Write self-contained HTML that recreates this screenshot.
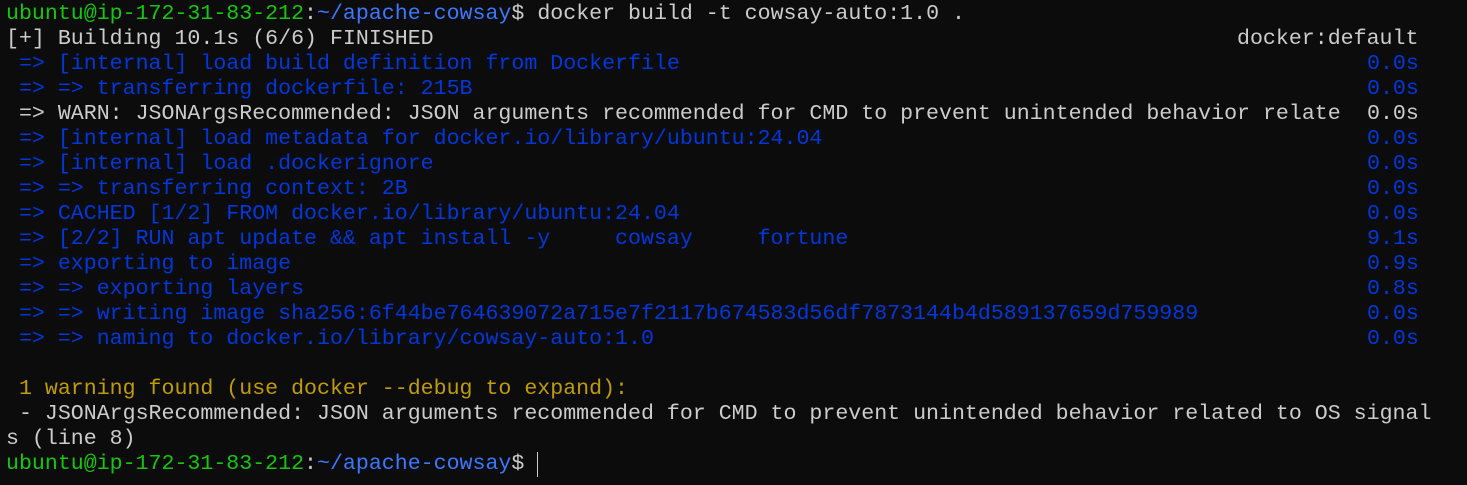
<!DOCTYPE html>
<html><head><meta charset="utf-8"><style>
html,body{margin:0;padding:0;background:#0c0c0c;width:1467px;height:485px;overflow:hidden}
.t{position:absolute;left:6px;top:2px;font-family:"Liberation Mono","DejaVu Sans Mono",monospace;font-size:21.6px;color:#cccccc}
.l{height:25px;line-height:25px;position:relative;white-space:pre}
.r{position:absolute;left:1361px}
.d{position:absolute;left:1231px}
.g{color:#16c60c}.c{color:#3b78ff}.b{color:#0037da}.y{color:#c19c00}
.cur{position:absolute;left:537px;top:452px;width:1px;height:25px;background:#cccccc}
</style></head><body>
<div class="t"><div class="l"><span class="g">ubuntu@ip-172-31-83-212</span>:<span class="c">~/apache-cowsay</span>$ docker build -t cowsay-auto:1.0 .</div><div class="l">[+] Building 10.1s (6/6) FINISHED<span class="d">docker:default</span></div><div class="l b"> =&gt; [internal] load build definition from Dockerfile<span class="r">0.0s</span></div><div class="l b"> =&gt; =&gt; transferring dockerfile: 215B<span class="r">0.0s</span></div><div class="l"> =&gt; WARN: JSONArgsRecommended: JSON arguments recommended for CMD to prevent unintended behavior relate<span class="r">0.0s</span></div><div class="l b"> =&gt; [internal] load metadata for docker.io/library/ubuntu:24.04<span class="r">0.0s</span></div><div class="l b"> =&gt; [internal] load .dockerignore<span class="r">0.0s</span></div><div class="l b"> =&gt; =&gt; transferring context: 2B<span class="r">0.0s</span></div><div class="l b"> =&gt; CACHED [1/2] FROM docker.io/library/ubuntu:24.04<span class="r">0.0s</span></div><div class="l b"> =&gt; [2/2] RUN apt update &amp;&amp; apt install -y     cowsay     fortune<span class="r">9.1s</span></div><div class="l b"> =&gt; exporting to image<span class="r">0.9s</span></div><div class="l b"> =&gt; =&gt; exporting layers<span class="r">0.8s</span></div><div class="l b"> =&gt; =&gt; writing image sha256:6f44be764639072a715e7f2117b674583d56df7873144b4d589137659d759989<span class="r">0.0s</span></div><div class="l b"> =&gt; =&gt; naming to docker.io/library/cowsay-auto:1.0<span class="r">0.0s</span></div><div class="l"> </div><div class="l y"> 1 warning found (use docker --debug to expand):</div><div class="l"> - JSONArgsRecommended: JSON arguments recommended for CMD to prevent unintended behavior related to OS signal</div><div class="l">s (line 8)</div><div class="l"><span class="g">ubuntu@ip-172-31-83-212</span>:<span class="c">~/apache-cowsay</span>$ </div></div>
<div class="cur"></div>
</body></html>
